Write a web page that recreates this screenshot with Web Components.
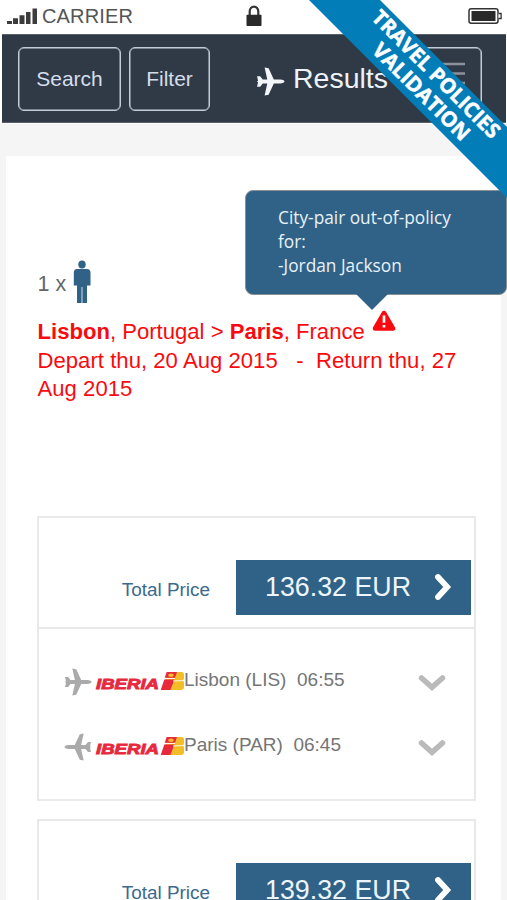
<!DOCTYPE html>
<html lang="en">
<head>
<meta charset="utf-8">
<title>Results</title>
<style>
html,body{margin:0;height:900px;overflow:hidden;background:#f5f5f5;font-family:"Liberation Sans",Arial,sans-serif}
</style>
</head>
<body>
<travel-app></travel-app>
<script>
const define = (name, html) => customElements.define(name, class extends HTMLElement {
  constructor() {
    super();
    const t = document.createElement('template');
    t.innerHTML = html;
    this.attachShadow({ mode: 'open' }).appendChild(t.content.cloneNode(true));
  }
});

define('status-bar', `
<style>
:host{display:grid;grid-template-columns:1fr auto 1fr;height:34px;background:#fff;color:#555;font-size:20px;align-items:center}
.l{display:flex;align-items:center;gap:5px;padding-left:7px;line-height:23px;letter-spacing:.15px;margin-top:-2px}
svg{display:block}
.r{justify-self:end;padding-right:5px;margin-top:-2px}
.lock{margin-top:-2px;margin-left:1px}
</style>
<div class="l"><svg width="30" height="17" fill="#3c3c3c"><path d="M0 13h5v3H0zM6 10.300h5V16H6zM12.500 7.200h5V16h-5zM19 4h4.500v12H19zM25.500 .5h4.500V16h-4.500z"/></svg><span>CARRIER</span></div>
<svg class="lock" width="18" height="22" viewBox="0 0 18 22"><path d="M4.700 11V6.500a4.300 4.800 0 0 1 8.600 0V11" fill="none" stroke="#333" stroke-width="2.200"/><rect x="1.500" y="9.800" width="15" height="11.200" rx=".8" fill="#292929"/></svg>
<svg class="r" width="34" height="18" viewBox="0 0 34 18"><rect x="1" y="1.700" width="29" height="14.600" rx="2.200" fill="#fff" stroke="#333" stroke-width="1.500"/><rect x="3.500" y="4" width="24" height="10" rx=".5" fill="#292929"/><path d="M30.500 6.500h2.600v5h-2.600" fill="#fff" stroke="#333" stroke-width="1.300"/></svg>
`);

define('nav-button', `
<style>
:host{display:flex;align-items:center;justify-content:center;box-sizing:border-box;height:64px;border:1px solid #c3ccd8;border-radius:6px;color:#d5deea;font-size:21px;box-shadow:inset 0 0 0 .5px #c3ccd8}
</style><slot></slot>`);

define('plane-icon', `
<style>:host{display:block;width:28px;height:28px;color:#aaa}svg{display:block;width:100%;height:100%}:host([back]) svg{transform:scaleX(-1)}</style>
<svg viewBox="0 0 28 28" fill="currentColor"><path d="M27.500 14c0 1-2 1.900-4 1.900h-6.300L12.200 26.800 8.300 27.600 10.900 15.900H6.500L4 19H1l1-4.300L.8 14l1.200-.7L1 9h3l2.500 3.100h4.400L8.300 .4l3.900 .8 5 10.900h6.300c2 0 4 .9 4 1.900z"/></svg>`);

define('nav-bar', `
<style>
:host{display:flex;align-items:flex-start;box-sizing:border-box;height:89px;margin:0 1px 0 2px;padding:12px 24px 0 16px;background:#303a46;border:solid #59616c;border-width:1px 0;gap:8px}
.s{width:103px}.f{width:81px}
.t{display:flex;align-items:center;height:62px;margin-left:39px;gap:8px;color:#eef3fa;font-size:28.500px}
.t plane-icon{width:29px;height:29px;color:#f2f5fa;margin-top:6px;margin-left:-1px}
.m{width:60px;margin-left:auto;justify-content:flex-end}
.m svg{margin-right:16px}
</style>
<nav-button class="s">Search</nav-button><nav-button class="f">Filter</nav-button>
<div class="t"><plane-icon></plane-icon><span>Results</span></div>
<nav-button class="m"><svg width="38" height="34" stroke="#89919b" stroke-width="2.500"><path d="M0 2h38M0 11.500h38M0 21h38"/></svg></nav-button>
`);

define('corner-ribbon', `
<style>:host{position:absolute;top:0;right:0;width:200px;height:200px;z-index:3}svg{display:block}
text{font:bold 20.800px "Open Sans",sans-serif;fill:#fff;stroke:#fff;stroke-width:.5px}</style>
<svg width="200" height="200"><path d="M2 0H73L200 127V198z" fill="#037db8"/>
<g transform="translate(128 76) rotate(45)" text-anchor="middle">
<text x="-.5" y="5.200" textLength="171" lengthAdjust="spacingAndGlyphs">TRAVEL POLICIES</text>
<text x="1.500" y="28" textLength="128" lengthAdjust="spacingAndGlyphs">VALIDATION</text></g></svg>
`);

define('policy-tooltip', `
<style>
:host{position:absolute;left:245px;top:190px;width:262px;height:105px;box-sizing:border-box;padding:15px 30px 0 32px;border:1.500px solid #8b8f92;border-radius:8px;background:#306186;color:#e8f2fa;font:17.300px/24px "Open Sans",sans-serif;z-index:2}
svg{position:absolute;left:109px;top:102px}
</style><slot></slot><svg width="34" height="17"><path d="M0 0H34L17 17z" fill="#306186"/></svg>
`);

define('route-summary', `
<style>
:host{display:block;height:360px;box-sizing:border-box;padding:104px 16px 0 31.500px;color:#fa0a0e;font-size:22.100px;line-height:28.500px}
.p{display:flex;align-items:center;height:45px;gap:7px;color:#666;font-size:21.500px}
.p span{margin-top:3px}
.p svg{margin-top:-1px}
.r{margin-top:13px;white-space:pre}
.c{display:flex;height:28.500px;gap:7px}
.a{margin-top:-8px}
.d{letter-spacing:.03px}
</style>
<div class="p"><span>1 x</span><svg width="18" height="44" viewBox="0 0 18 44" fill="#306186"><ellipse cx="9" cy="4.500" rx="3.700" ry="4"/><path d="M4 9h10q3.500 0 3.500 4v12.500H14V43H9.400V27h-.8v16H4V25.500H.8V13Q.8 9 4 9z"/></svg></div>
<div class="r"><div class="c"><span><b>Lisbon</b>, Portugal &gt; <b>Paris</b>, France</span><svg class="a" width="24" height="22" viewBox="0 0 24 22"><path d="M12 3L21 18.500H3z" fill="#fa0a0e" stroke="#fa0a0e" stroke-width="4.500" stroke-linejoin="round"/><path d="M12 5.500v7.300M12 15v2.600" stroke="#fff" stroke-width="2.700"/></svg></div><div class="d">Depart thu, 20 Aug 2015&nbsp;  -&nbsp; Return thu, 27
Aug 2015</div></div>
`);

define('iberia-logo', `
<style>:host{display:block;width:89px;height:20px}svg{display:block}
text{font:italic bold 15px "Liberation Sans",sans-serif;fill:#e8283d;stroke:#e8283d;stroke-width:.9px}</style>
<svg width="89" height="20" viewBox="0 0 89 20"><text x="1" y="18" textLength="63" lengthAdjust="spacingAndGlyphs">IBERIA</text>
<path d="M73.200 1H87q2 0 2 2.500v3q0 3-2 3 2 0 2 3v3.500q0 3-3 3H66.500z" fill="#f2bd27"/>
<path d="M71.700 1H82L80 6.800H69.700zM69.300 8.600H79.500L75.300 19H65.700z" fill="#e8283d"/>
<ellipse cx="76" cy="4.200" rx="2.800" ry="1.700" fill="#f4bd29"/><path d="M68.500 7.500H80M78 10l11-.5" stroke="#fff" stroke-width=".9"/></svg>
`);

define('flight-row', `
<style>
:host{display:flex;align-items:center;height:65px;color:#757575;font-size:19px}
iberia-logo{margin-top:-1px}
.c{margin-left:auto;margin-right:28px;margin-top:2px}
.n{white-space:pre;margin-top:-4px}
</style>
<slot name="icon"></slot><iberia-logo></iberia-logo><span class="n"><slot></slot></span>
<svg class="c" width="28" height="18" viewBox="0 0 28 18"><path d="M3.500 4L14 13.300 24.500 4" fill="none" stroke="#bababa" stroke-width="5.500" stroke-linecap="round"/></svg>
`);

define('fare-card', `
<style>
:host{display:block;box-sizing:border-box;height:285px;width:438.500px;margin:0 0 18px 31px;border:2px solid #e9e9e9;background:#fff}
.h{box-sizing:border-box;height:111px;border-bottom:2px solid #e9e9e9;padding:42px 3px 0 0;display:flex;justify-content:flex-end;gap:26px}
.l{color:#3b6a8e;font-size:18.900px;line-height:59px}
.b{display:flex;align-items:center;justify-content:space-between;box-sizing:border-box;width:234.500px;height:55px;background:#306186;color:#edf5fc;font-size:26.800px;padding:0 18px 0 29px}
.b svg{margin-top:-1px}
.rows{padding:20px 0 0 25px}
</style>
<div class="h"><span class="l">Total Price</span><div class="b"><slot name="price"></slot><svg width="20" height="28" viewBox="0 0 20 28"><path d="M5 4L14.200 14 5 24" fill="none" stroke="#fff" stroke-width="5.800" stroke-linecap="round"/></svg></div></div>
<div class="rows"><slot></slot></div>
`);

define('travel-app', `
<style>
:host{display:block;position:relative;width:507px;height:900px;overflow:hidden;background:#fff}
.body{background:#f5f5f5;border-top:1px solid #fafafa;padding:32px 6px 0;height:744px}
.panel{background:#fff;height:745px}
flight-row plane-icon{margin-right:3px}
</style>
<status-bar></status-bar><nav-bar></nav-bar>
<div class="body"><div class="panel"><route-summary></route-summary>
<fare-card><span slot="price">136.32 EUR</span>
<flight-row><plane-icon slot="icon"></plane-icon>Lisbon (LIS)&nbsp; 06:55</flight-row>
<flight-row><plane-icon slot="icon" back></plane-icon>Paris (PAR)&nbsp; 06:45</flight-row></fare-card>
<fare-card><span slot="price">139.32 EUR</span></fare-card></div></div>
<policy-tooltip>City-pair out-of-policy<br>for:<br>-Jordan Jackson</policy-tooltip>
<corner-ribbon></corner-ribbon>
`);
</script>
</body>
</html>
